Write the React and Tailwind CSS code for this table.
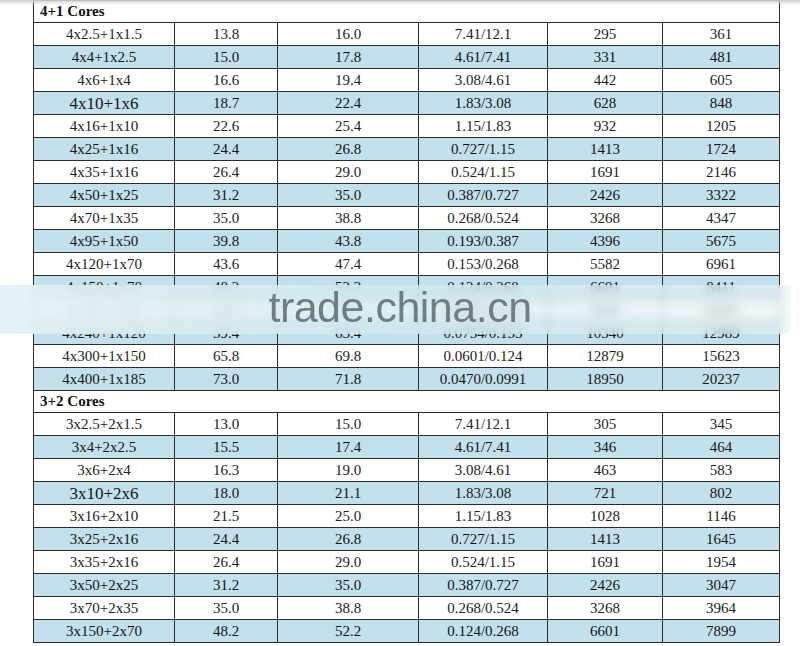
import React from 'react';

const fourPlusOne = [
    ['4x2.5+1x1.5', '13.8', '16.0', '7.41/12.1', '295', '361'],
    ['4x4+1x2.5', '15.0', '17.8', '4.61/7.41', '331', '481'],
    ['4x6+1x4', '16.6', '19.4', '3.08/4.61', '442', '605'],
    ['4x10+1x6', '18.7', '22.4', '1.83/3.08', '628', '848', true],
    ['4x16+1x10', '22.6', '25.4', '1.15/1.83', '932', '1205'],
    ['4x25+1x16', '24.4', '26.8', '0.727/1.15', '1413', '1724'],
    ['4x35+1x16', '26.4', '29.0', '0.524/1.15', '1691', '2146'],
    ['4x50+1x25', '31.2', '35.0', '0.387/0.727', '2426', '3322'],
    ['4x70+1x35', '35.0', '38.8', '0.268/0.524', '3268', '4347'],
    ['4x95+1x50', '39.8', '43.8', '0.193/0.387', '4396', '5675'],
    ['4x120+1x70', '43.6', '47.4', '0.153/0.268', '5582', '6961'],
    ['4x150+1x70', '48.2', '52.2', '0.124/0.268', '6691', '8411'],
    ['4x185+1x95', '53.2', '57.2', '0.0991/0.193', '8300', '10205'],
    ['4x240+1x120', '59.4', '63.4', '0.0754/0.153', '10340', '12989'],
    ['4x300+1x150', '65.8', '69.8', '0.0601/0.124', '12879', '15623'],
    ['4x400+1x185', '73.0', '71.8', '0.0470/0.0991', '18950', '20237'],
];

const threePlusTwo = [
    ['3x2.5+2x1.5', '13.0', '15.0', '7.41/12.1', '305', '345'],
    ['3x4+2x2.5', '15.5', '17.4', '4.61/7.41', '346', '464'],
    ['3x6+2x4', '16.3', '19.0', '3.08/4.61', '463', '583'],
    ['3x10+2x6', '18.0', '21.1', '1.83/3.08', '721', '802', true],
    ['3x16+2x10', '21.5', '25.0', '1.15/1.83', '1028', '1146'],
    ['3x25+2x16', '24.4', '26.8', '0.727/1.15', '1413', '1645'],
    ['3x35+2x16', '26.4', '29.0', '0.524/1.15', '1691', '1954'],
    ['3x50+2x25', '31.2', '35.0', '0.387/0.727', '2426', '3047'],
    ['3x70+2x35', '35.0', '38.8', '0.268/0.524', '3268', '3964'],
    ['3x150+2x70', '48.2', '52.2', '0.124/0.268', '6601', '7899'],
];

function Section({ title, rows }) {
    return (
        <>
            <tr className="h-[22px]">
                <td colSpan={6} className="border border-[#2b2b2b] px-[6px] text-left font-bold text-[15px] leading-none text-[#111]">
                    {title}
                </td>
            </tr>
            {rows.map((r, i) => (
                <tr key={r[0]} className={`h-[23px] ${i % 2 === 1 ? 'bg-[#c3e1ec]' : 'bg-white'}`}>
                    {r.slice(0, 6).map((v, j) => (
                        <td
                            key={j}
                            className={`border border-[#2b2b2b] text-center leading-none ${j === 0 && r[6] ? 'text-[17px]' : 'text-[15px]'} ${i % 2 === 1 ? 'text-[#141414]' : 'text-[#222]'}`}
                        >
                            {v}
                        </td>
                    ))}
                </tr>
            ))}
        </>
    );
}

export default function App() {
    return (
        <div className="relative w-[800px] h-[646px] bg-white overflow-hidden" style={{ fontFamily: '"Liberation Serif", "Times New Roman", serif' }}>
            <div className="pl-[33px]">
                <table className="border-collapse table-fixed w-[746px]">
                    <colgroup>
                        <col className="w-[141px]" />
                        <col className="w-[103px]" />
                        <col className="w-[141px]" />
                        <col className="w-[129px]" />
                        <col className="w-[115px]" />
                        <col className="w-[117px]" />
                    </colgroup>
                    <tbody>
                        <Section title="4+1 Cores" rows={fourPlusOne} />
                        <Section title="3+2 Cores" rows={threePlusTwo} />
                    </tbody>
                </table>
            </div>

            {/* top shading of the scan */}
            <div className="absolute top-0 left-0 right-0 h-[5px] bg-gradient-to-b from-[#cfcfcf] to-transparent pointer-events-none" />

            {/* watermark band */}
            <div className="absolute left-0 w-[790px] top-[285px] h-[49px] bg-gradient-to-r from-[#e4f0f4]/90 via-[#d3e9f1]/80 to-[#e8f2f5]/60 backdrop-blur-[5px] pointer-events-none flex items-center justify-center">
                <span className="text-[43px] leading-none text-[#6f7e85] tracking-[-0.5px] pl-[10px] pb-[4px]" style={{ fontFamily: '"Liberation Sans", Arial, sans-serif' }}>
                    trade.china.cn
                </span>
            </div>
        </div>
    );
}
